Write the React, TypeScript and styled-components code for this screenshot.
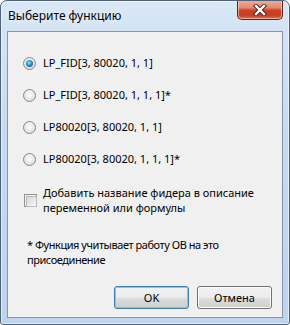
import React from "react";
import styled, { createGlobalStyle } from "styled-components";

const Global = createGlobalStyle`
  html, body { margin: 0; padding: 0; background: #ffffff; }
  * { box-sizing: border-box; }
`;

const Window = styled.div`
  width: 290px;
  height: 325px;
  border: 1px solid #4f6177;
  border-radius: 7px 7px 3px 3px;
  background: linear-gradient(180deg, #d9e7f6 0%, #c6daf0 40%, #bed4ec 100%);
  display: flex;
  flex-direction: column;
  font-family: "Noto Sans", "Open Sans", sans-serif;
  font-size: 11px;
  color: #000;
  overflow: hidden;
  box-shadow: inset 0 0 0 1px rgba(255, 255, 255, 0.55);
`;

const TitleBar = styled.div`
  height: 30px;
  display: flex;
  justify-content: space-between;
  align-items: flex-start;
  padding: 0 6px 0 7px;
`;

const Title = styled.div`
  margin-top: 7px;
  font-size: 12px;
  line-height: 16px;
  color: #000;
  text-shadow: 0 0 6px rgba(255, 255, 255, 0.9);
`;

const CloseButton = styled.div`
  width: 46px;
  height: 20px;
  margin-top: -1px;
  border: 1px solid #5e2519;
  border-top: none;
  border-radius: 0 0 5px 5px;
  background: linear-gradient(180deg, #eeb1a0 0%, #e08a73 40%, #cc4128 55%, #c83d24 80%, #de7050 100%);
  box-shadow: inset 0 0 0 1px rgba(255, 220, 200, 0.6);
  display: flex;
  align-items: center;
  justify-content: center;
`;

const Client = styled.div`
  flex: 1;
  margin: 0 6px 6px 6px;
  border: 1px solid #8496ad;
  background: #f0f0f0;
  display: flex;
  flex-direction: column;
  padding: 23px 10px 8px 15px;
  white-space: nowrap;
`;

const RadioGroup = styled.div`
  display: flex;
  flex-direction: column;
  gap: 16px;
`;

const Row = styled.label`
  display: flex;
  align-items: center;
  gap: 7px;
  line-height: 16px;
  height: 16px;
`;

const RadioDot = styled.span<{ $checked?: boolean }>`
  position: relative;
  width: 13px;
  height: 13px;
  flex: none;
  border-radius: 50%;
  border: 1px solid #8a8a8a;
  background: radial-gradient(circle at 50% 40%, #ffffff 0%, #e6e6e6 55%, #cfcfcf 100%);
  &::after {
    content: "";
    display: ${(p) => (p.$checked ? "block" : "none")};
    position: absolute;
    left: 2px;
    top: 2px;
    width: 7px;
    height: 7px;
    border-radius: 50%;
    background: radial-gradient(circle at 45% 40%, #9be4ff 0%, #2b8fd6 45%, #0d3e6a 100%);
  }
`;

const CheckRow = styled.label`
  display: flex;
  align-items: center;
  gap: 6px;
  margin-top: 18px;
  padding-left: 1px;
  line-height: 15px;
`;

const CheckBox = styled.span`
  width: 13px;
  height: 13px;
  flex: none;
  border: 1px solid #8e8f8f;
  padding: 1px;
  background: #f4f4f4;
  &::after {
    content: "";
    display: block;
    width: 100%;
    height: 100%;
    border: 1px solid #b9b9b9;
    background: linear-gradient(135deg, #d6d6d6 0%, #eaeaea 60%, #fafafa 100%);
  }
`;

const Note = styled.div`
  margin-top: 22px;
  padding-left: 4px;
  line-height: 15px;
  letter-spacing: -0.45px;
`;

const ButtonRow = styled.div`
  margin-top: auto;
  display: flex;
  justify-content: flex-end;
  gap: 8px;
`;

const Button = styled.button<{ $default?: boolean }>`
  width: 75px;
  height: 23px;
  font-family: inherit;
  font-size: 11px;
  color: #000;
  border-radius: 3px;
  border: 1px solid ${(p) => (p.$default ? "#3c7fb1" : "#707070")};
  background: linear-gradient(180deg, #f2f2f2 0%, #ebebeb 50%, #dddddd 51%, #cfcfcf 100%);
  box-shadow: inset 0 0 0 1px ${(p) => (p.$default ? "#63d2f6" : "#fcfcfc")};
  padding: 0;
`;

const options = [
  "LP_FID[3, 80020, 1, 1]",
  "LP_FID[3, 80020, 1, 1, 1]*",
  "LP80020[3, 80020, 1, 1]",
  "LP80020[3, 80020, 1, 1, 1]*",
];

export default function App() {
  return (
    <>
      <Global />
      <Window>
        <TitleBar>
          <Title>Выберите функцию</Title>
          <CloseButton>
            <svg width="14" height="12" viewBox="0 0 14 12">
              <path d="M3 2 L11 10 M11 2 L3 10" stroke="#4a1e16" strokeWidth="4.2" strokeLinecap="square" />
              <path d="M3 2 L11 10 M11 2 L3 10" stroke="#ffffff" strokeWidth="2.4" strokeLinecap="square" />
            </svg>
          </CloseButton>
        </TitleBar>
        <Client>
          <RadioGroup>
            {options.map((o, i) => (
              <Row key={o}>
                <RadioDot $checked={i === 0} />
                <span>{o}</span>
              </Row>
            ))}
          </RadioGroup>
          <CheckRow>
            <CheckBox />
            <span>
              Добавить название фидера в описание
              <br />
              переменной или формулы
            </span>
          </CheckRow>
          <Note>
            * Функция учитывает работу ОВ на это
            <br />
            присоединение
          </Note>
          <ButtonRow>
            <Button $default>OK</Button>
            <Button>Отмена</Button>
          </ButtonRow>
        </Client>
      </Window>
    </>
  );
}
